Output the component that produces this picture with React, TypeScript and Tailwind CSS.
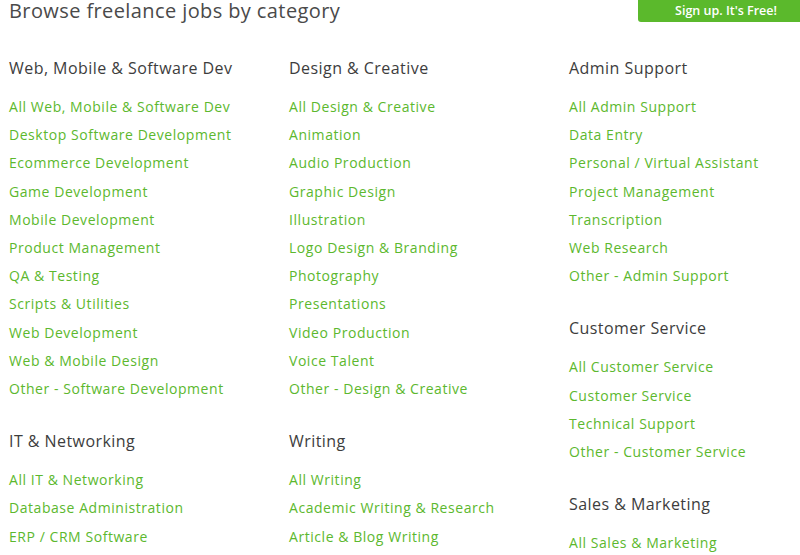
const columns: { title: string; links: string[] }[][] = [
  [
    {
      title: 'Web, Mobile & Software Dev',
      links: [
        'All Web, Mobile & Software Dev',
        'Desktop Software Development',
        'Ecommerce Development',
        'Game Development',
        'Mobile Development',
        'Product Management',
        'QA & Testing',
        'Scripts & Utilities',
        'Web Development',
        'Web & Mobile Design',
        'Other - Software Development',
      ],
    },
    {
      title: 'IT & Networking',
      links: ['All IT & Networking', 'Database Administration', 'ERP / CRM Software'],
    },
  ],
  [
    {
      title: 'Design & Creative',
      links: [
        'All Design & Creative',
        'Animation',
        'Audio Production',
        'Graphic Design',
        'Illustration',
        'Logo Design & Branding',
        'Photography',
        'Presentations',
        'Video Production',
        'Voice Talent',
        'Other - Design & Creative',
      ],
    },
    {
      title: 'Writing',
      links: ['All Writing', 'Academic Writing & Research', 'Article & Blog Writing'],
    },
  ],
  [
    {
      title: 'Admin Support',
      links: [
        'All Admin Support',
        'Data Entry',
        'Personal / Virtual Assistant',
        'Project Management',
        'Transcription',
        'Web Research',
        'Other - Admin Support',
      ],
    },
    {
      title: 'Customer Service',
      links: [
        'All Customer Service',
        'Customer Service',
        'Technical Support',
        'Other - Customer Service',
      ],
    },
    {
      title: 'Sales & Marketing',
      links: ['All Sales & Marketing'],
    },
  ],
]

export default function App() {
  return (
    <div className="w-[800px] h-[555px] overflow-hidden bg-white font-['Open_Sans',sans-serif]">
      <div className="flex items-start justify-between h-[22px]">
        <h2 className="pl-[9px] text-[20px] leading-[22px] tracking-[0.4px] text-[#4a4a4a]">
          Browse freelance jobs by category
        </h2>
        <button className="w-[176px] h-[22px] -mr-[14px] shrink-0 rounded-b-[3px] bg-[#5bb92c] text-white text-[12.5px] font-semibold leading-[22px] text-center">
          Sign up. It's Free!
        </button>
      </div>

      <div className="grid grid-cols-[280px_280px_240px] mt-[34px]">
        {columns.map((col, i) => (
          <div key={i} className="pl-[9px]">
            {col.map((section, j) => (
              <section key={section.title} className={j > 0 ? 'mt-[26px]' : ''}>
                <h3 className="text-[16px] leading-[24px] mb-[13px] tracking-[0.45px] text-[#3d3d3d]">
                  {section.title}
                </h3>
                <ul>
                  {section.links.map((link) => (
                    <li key={link}>
                      <a href="#" className="block text-[14px] leading-[28.2px] tracking-[0.55px] text-[#5cb82e]">
                        {link}
                      </a>
                    </li>
                  ))}
                </ul>
              </section>
            ))}
          </div>
        ))}
      </div>
    </div>
  )
}
